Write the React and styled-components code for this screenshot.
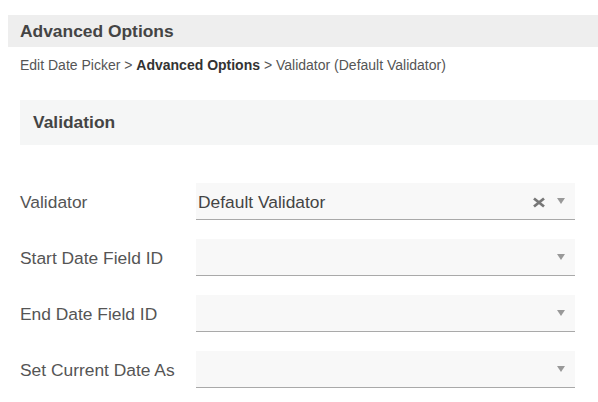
import React from "react";
import styled, { createGlobalStyle } from "styled-components";

const GlobalStyle = createGlobalStyle`
  html, body {
    margin: 0;
    padding: 0;
    background: #fff;
    font-family: "Liberation Sans", Arial, sans-serif;
    overflow: hidden;
  }
`;

const Page = styled.div`
  width: 598px;
  height: 402px;
  padding-top: 15px;
  box-sizing: border-box;
`;

const TitleBar = styled.div`
  margin-left: 8px;
  height: 32px;
  display: flex;
  align-items: center;
  padding-left: 12px;
  background: #eeeeee;
  color: #444;
  font-size: 17.4px;
  font-weight: 700;
`;

const Breadcrumb = styled.div`
  margin: 10px 0 0 20px;
  height: 16px;
  line-height: 16px;
  font-size: 14px;
  color: #555;

  b {
    color: #333;
  }
`;

const SectionHeader = styled.div`
  margin: 27px 0 0 20px;
  height: 45px;
  display: flex;
  align-items: center;
  padding-left: 13px;
  background: #f5f6f6;
  color: #444;
  font-size: 17.4px;
  font-weight: 700;
`;

const Form = styled.div`
  margin-top: 38px;
  display: flex;
  flex-direction: column;
  gap: 19px;
  padding-left: 20px;
`;

const Row = styled.div`
  display: grid;
  grid-template-columns: 176px 379px;
  align-items: center;
  height: 37px;
`;

const Label = styled.div`
  font-size: 17.4px;
  color: #555;
  padding-top: 2px;
`;

const Select = styled.div`
  height: 37px;
  box-sizing: border-box;
  display: flex;
  align-items: center;
  padding: 2px 10px 0 2px;
  background: #f8f8f8;
  border-bottom: 1px solid #a9a9a9;
`;

const Value = styled.span`
  flex: 1;
  font-size: 17.4px;
  color: #444;
`;

const Clear = styled.svg`
  flex-shrink: 0;
  width: 14px;
  height: 11px;
  margin-right: 11px;
`;

const Caret = styled.svg`
  flex-shrink: 0;
  width: 8px;
  height: 6px;
  margin-top: -2px;
`;

const fields = [
  { label: "Validator", value: "Default Validator", clearable: true },
  { label: "Start Date Field ID" },
  { label: "End Date Field ID" },
  { label: "Set Current Date As" },
];

const SelectField = ({ label, value, clearable }) => (
  <Row>
    <Label>{label}</Label>
    <Select>
      <Value>{value}</Value>
      {clearable && (
        <Clear viewBox="0 0 14 11">
          <path d="M2 1.5 L12 9.5 M12 1.5 L2 9.5" stroke="#777" strokeWidth="2.8" />
        </Clear>
      )}
      <Caret viewBox="0 0 8 6">
        <path d="M0 0 H8 L4 6 Z" fill="#999" />
      </Caret>
    </Select>
  </Row>
);

export default function App() {
  return (
    <Page>
      <GlobalStyle />
      <TitleBar>Advanced Options</TitleBar>
      <Breadcrumb>
        Edit Date Picker &gt; <b>Advanced Options</b> &gt; Validator (Default Validator)
      </Breadcrumb>
      <SectionHeader>Validation</SectionHeader>
      <Form>
        {fields.map(f => (
          <SelectField key={f.label} {...f} />
        ))}
      </Form>
    </Page>
  );
}
